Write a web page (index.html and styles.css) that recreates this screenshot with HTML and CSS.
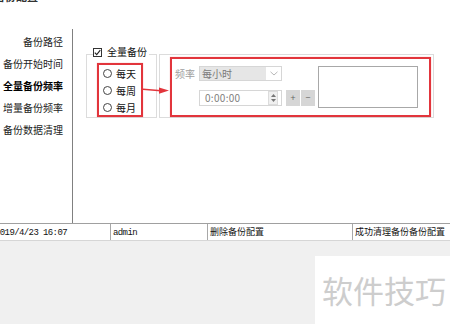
FILE: index.html
```html
<!DOCTYPE html>
<html lang="zh-CN">
<head>
<meta charset="utf-8">
<link rel="stylesheet" href="styles.css">
</head>
<body>
<div class="title"><span>备份配置</span></div>
<div class="main">
  <nav class="nav">
    <div class="nav-item">备份路径</div>
    <div class="nav-item">备份开始时间</div>
    <div class="nav-item active">全量备份频率</div>
    <div class="nav-item">增量备份频率</div>
    <div class="nav-item">备份数据清理</div>
  </nav>
  <div class="content">
    <div class="group g1">
      <div class="legend">
        <span class="cb"><svg width="7" height="7" viewBox="0 0 7 7"><polyline points="0.8,3.6 2.7,5.6 6.3,1.2" fill="none" stroke="#222" stroke-width="1.1"/></svg></span>
        <span>全量备份</span>
      </div>
      <div class="hl radios">
        <div class="radio"><span class="dot"></span><span>每天</span></div>
        <div class="radio"><span class="dot"></span><span>每周</span></div>
        <div class="radio"><span class="dot"></span><span>每月</span></div>
      </div>
    </div>
    <div class="group g2">
      <div class="hl freq">
        <div class="lbl">频率</div>
        <div class="combo">
          <span class="combo-val">每小时</span>
          <span class="combo-btn"><svg width="8" height="5" viewBox="0 0 8 5"><polyline points="0.5,0.8 4,4 7.5,0.8" fill="none" stroke="#b8b8b8" stroke-width="1"/></svg></span>
        </div>
        <div class="spin">
          <span class="spin-val">0:00:00</span>
          <span class="spin-btns">
            <svg width="5" height="3" viewBox="0 0 5 3"><polygon points="0,3 2.5,0 5,3" fill="#777"/></svg>
            <svg width="5" height="3" viewBox="0 0 5 3"><polygon points="0,0 2.5,3 5,0" fill="#777"/></svg>
          </span>
        </div>
        <div class="btn plus">+</div>
        <div class="btn minus">−</div>
        <div class="textbox"></div>
      </div>
    </div>
    <svg class="arrow" width="28" height="8" viewBox="0 0 28 8"><line x1="0" y1="2.2" x2="18" y2="3.8" stroke="#e2353c" stroke-width="1.6"/><polygon points="16,0.5 26,3.6 16,6.8" fill="#e2353c"/></svg>
  </div>
</div>
<div class="status">
  <div class="cell first"><span class="mono date">2019/4/23 16:07</span></div>
  <div class="cell"><span class="mono">admin</span></div>
  <div class="cell">删除备份配置</div>
  <div class="cell last">成功清理备份备份配置</div>
</div>
<div class="lower">
  <div class="wm">软件技巧</div>
</div>
</body>
</html>
```
FILE: styles.css
```css
body {
  margin: 0;
  width: 450px;
  height: 324px;
  overflow: hidden;
  background: #f0f0f0;
  font-family: "Noto Sans CJK SC", sans-serif;
  font-size: 10px;
  color: #222;
}

.title {
  height: 3px;
  overflow: hidden;
  background: #fff;
}
.title span {
  display: block;
  font-weight: bold;
  font-size: 11px;
  line-height: 11px;
  margin-top: -9px;
  margin-left: -6px;
  color: #333;
}

.main {
  height: 220px;
  box-sizing: border-box;
  padding-top: 26px;
  background: #fff;
  display: flex;
}

.nav {
  width: 73px;
  box-sizing: border-box;
  border-right: 1px solid #808080;
  padding-top: 2px;
}
.nav-item {
  text-align: right;
  padding-right: 9px;
  line-height: 22px;
  white-space: nowrap;
  color: #222;
}
.nav-item.active {
  font-weight: bold;
  color: #000;
}

.content {
  flex: 1;
  position: relative;
  display: flex;
  align-items: flex-start;
  padding: 25px 0 0 13px;
}

.group {
  border: 1px solid #dcdcdc;
  box-sizing: border-box;
  height: 64px;
}
.g1 {
  width: 71px;
}
.g2 {
  width: 275px;
  margin-left: 2px;
}

.legend {
  display: flex;
  align-items: center;
  gap: 5px;
  width: fit-content;
  height: 12px;
  line-height: 12px;
  margin: -9px 0 0 6px;
  padding-right: 2px;
  background: #fff;
  color: #111;
}
.cb {
  width: 9px;
  height: 9px;
  border: 1px solid #333;
  box-sizing: border-box;
  display: flex;
  align-items: center;
  justify-content: center;
  background: #fff;
}

.hl {
  border: 2px solid #e2353c;
  box-sizing: border-box;
  box-shadow: 0 0 1px rgba(226, 53, 60, 0.45);
}

.radios {
  width: 46px;
  height: 54px;
  margin: 5px 0 0 10px;
}
.radio {
  display: flex;
  align-items: center;
  gap: 4px;
  height: 17px;
  padding-left: 4px;
  color: #111;
}
.dot {
  width: 9px;
  height: 9px;
  border-radius: 50%;
  border: 1px solid #444;
  box-sizing: border-box;
  background: #fff;
}

.freq {
  width: 261px;
  height: 60px;
  margin: 2px 0 0 10px;
  padding: 7px 0 0 3px;
  display: grid;
  grid-template-columns: 24px 83px 4px 14px 1px 14px 3px 100px;
  grid-template-rows: 15px 9px 16px;
}
.lbl {
  grid-column: 1;
  grid-row: 1;
  line-height: 15px;
  color: #a0a0a0;
}
.combo {
  grid-column: 2;
  grid-row: 1;
  display: flex;
  border: 1px solid #d6d6d6;
  box-sizing: border-box;
  background: #fff;
}
.combo-val {
  flex: 1;
  background: #e6e6e6;
  color: #7a7a7a;
  padding-left: 2px;
  line-height: 13px;
}
.combo-btn {
  width: 15px;
  display: flex;
  align-items: center;
  justify-content: center;
}
.spin {
  grid-column: 2;
  grid-row: 3;
  display: flex;
  align-items: center;
  border: 1px solid #d6d6d6;
  box-sizing: border-box;
  background: #fff;
}
.spin-val {
  flex: 1;
  padding-left: 5px;
  line-height: 14px;
  color: #808080;
  letter-spacing: 0.3px;
}
.spin-btns {
  width: 8px;
  height: 12px;
  margin-right: 3px;
  background: #f0f0f0;
  border: 1px solid #dcdcdc;
  display: flex;
  flex-direction: column;
  align-items: center;
  justify-content: space-evenly;
}
.btn {
  grid-row: 3;
  background: #d6d6d6;
  color: #666;
  font-size: 9px;
  line-height: 16px;
  text-align: center;
}
.plus { grid-column: 4; }
.minus { grid-column: 6; }
.textbox {
  grid-column: 8;
  grid-row: 1 / -1;
  align-self: start;
  height: 42px;
  border: 1px solid #a8a8a8;
  box-sizing: border-box;
  background: #fff;
}

.arrow {
  position: absolute;
  left: 70px;
  top: 58px;
}

.status {
  height: 18px;
  box-sizing: border-box;
  border-top: 1px solid #a0a0a0;
  border-bottom: 1px solid #d6d6d6;
  background: #fff;
  display: grid;
  grid-template-columns: 111px 97px 145px 1fr;
  font-size: 9px;
  color: #111;
}
.cell {
  border-right: 1px solid #a8a8a8;
  padding-left: 2px;
  line-height: 16px;
  white-space: nowrap;
  overflow: hidden;
}
.cell.first {
  padding-left: 0;
}
.cell.last {
  border-right: none;
}
.mono {
  font-family: "Liberation Mono", monospace;
  font-size: 9px;
  letter-spacing: -0.6px;
}
.date {
  display: inline-block;
  margin-left: -5px;
}

.lower {
  height: 83px;
  box-sizing: border-box;
  padding-top: 15px;
  display: flex;
  justify-content: flex-end;
}
.wm {
  width: 135px;
  height: 68px;
  box-sizing: border-box;
  padding-left: 7px;
  background: #fff;
  color: #cdcdcd;
  font-size: 31px;
  line-height: 68px;
  white-space: nowrap;
  overflow: hidden;
}
```
